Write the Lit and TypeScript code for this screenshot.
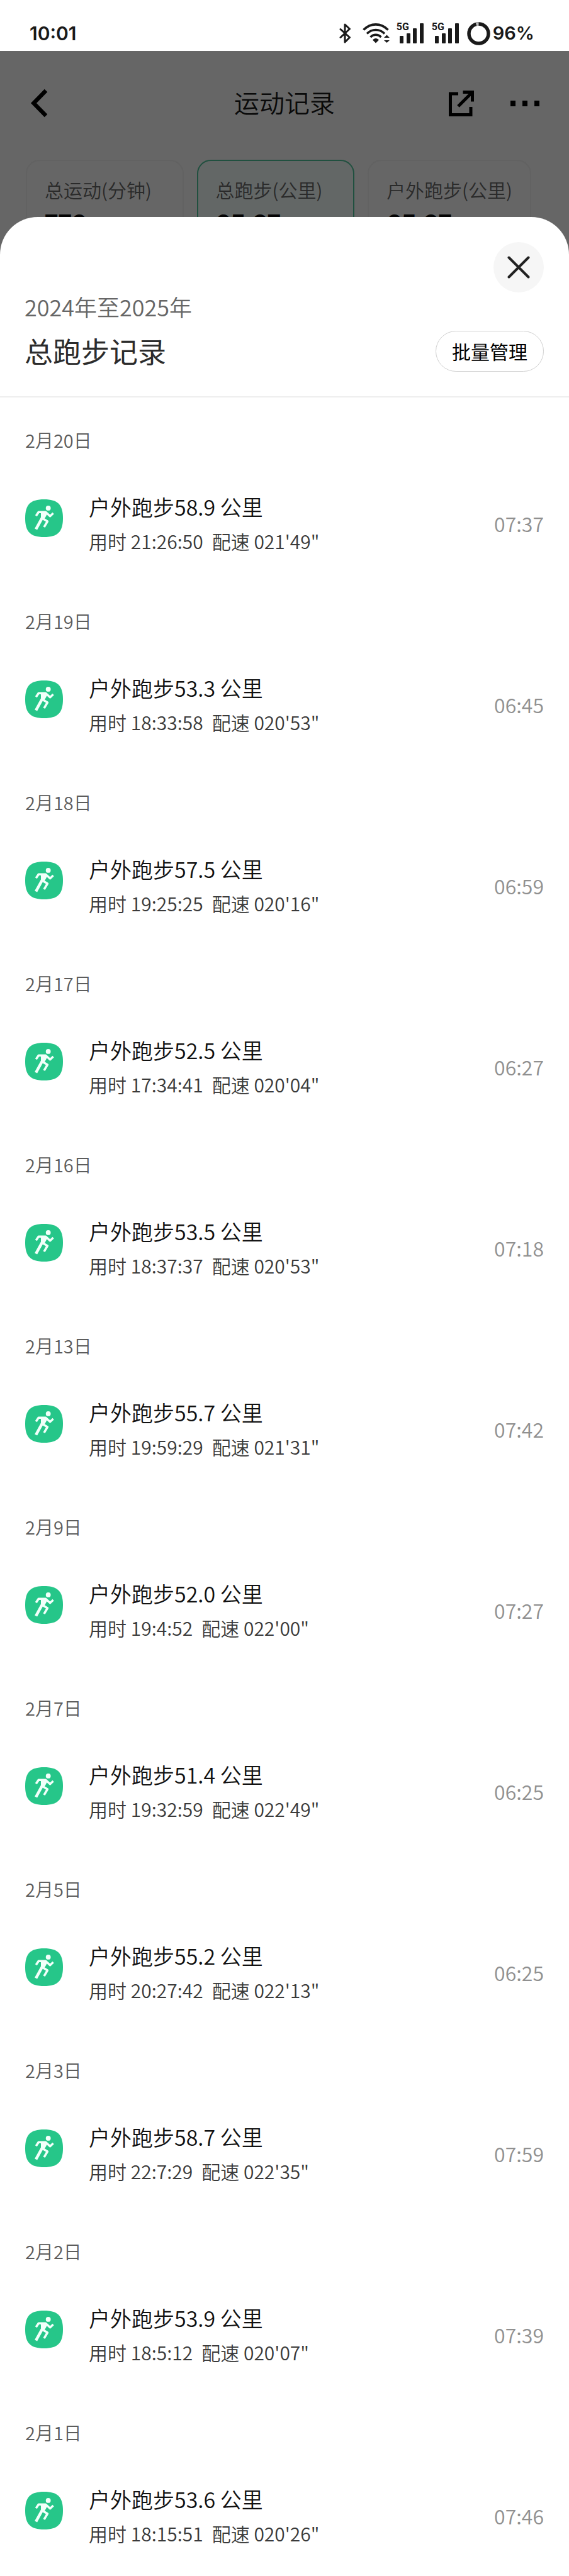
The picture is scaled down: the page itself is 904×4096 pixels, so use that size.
import { LitElement, html, css } from "lit";
import { customElement, property } from "lit/decorators.js";

interface RunRecord {
  date: string;
  km: string;
  duration: string;
  pace: string;
  time: string;
}

const RECORDS: RunRecord[] = [
  { date: "2月20日", km: "58.9", duration: "21:26:50", pace: "021'49\"", time: "07:37" },
  { date: "2月19日", km: "53.3", duration: "18:33:58", pace: "020'53\"", time: "06:45" },
  { date: "2月18日", km: "57.5", duration: "19:25:25", pace: "020'16\"", time: "06:59" },
  { date: "2月17日", km: "52.5", duration: "17:34:41", pace: "020'04\"", time: "06:27" },
  { date: "2月16日", km: "53.5", duration: "18:37:37", pace: "020'53\"", time: "07:18" },
  { date: "2月13日", km: "55.7", duration: "19:59:29", pace: "021'31\"", time: "07:42" },
  { date: "2月9日", km: "52.0", duration: "19:4:52", pace: "022'00\"", time: "07:27" },
  { date: "2月7日", km: "51.4", duration: "19:32:59", pace: "022'49\"", time: "06:25" },
  { date: "2月5日", km: "55.2", duration: "20:27:42", pace: "022'13\"", time: "06:25" },
  { date: "2月3日", km: "58.7", duration: "22:7:29", pace: "022'35\"", time: "07:59" },
  { date: "2月2日", km: "53.9", duration: "18:5:12", pace: "020'07\"", time: "07:39" },
  { date: "2月1日", km: "53.6", duration: "18:15:51", pace: "020'26\"", time: "07:46" },
];

const SUMMARY = [
  { label: "总运动(分钟)", value: "776", active: false },
  { label: "总跑步(公里)", value: "65.07", active: true },
  { label: "户外跑步(公里)", value: "65.07", active: false },
];

@customElement("status-bar")
class StatusBar extends LitElement {
  static styles = css`
    :host {
      display: flex;
      align-items: flex-end;
      justify-content: space-between;
      box-sizing: border-box;
      height: 81px;
      padding: 0 55px 8px 47px;
      color: #1a1a1a;
      background: #fff;
      font: 600 30px/40px Inter, "Open Sans", sans-serif;
    }
    .icons {
      display: flex;
      align-items: center;
      height: 40px;
      font-size: 29px;
    }
    .bt { margin-right: 18px; }
    .wifi { margin-right: 11px; }
    .signal {
      position: relative;
      width: 44px;
      height: 32px;
      margin-right: 12px;
    }
    .gen {
      position: absolute;
      left: 0;
      top: -3px;
      font: 700 16px/18px Roboto, sans-serif;
    }
    .ring { margin-right: 4px; }
    svg { display: block; }
  `;

  private signal() {
    return html`<span class="signal">
      <span class="gen">5G</span>
      <svg width="44" height="32" viewBox="0 0 44 32" fill="#1a1a1a">
        <rect x="5" y="20" width="6" height="12" rx="1" />
        <rect x="16" y="16" width="6" height="16" rx="1" />
        <rect x="26" y="8" width="6" height="24" rx="1" />
        <rect x="37" y="0" width="6" height="32" rx="1" />
      </svg>
    </span>`;
  }

  render() {
    return html`
      <span>10:01</span>
      <span class="icons">
        <svg class="bt" width="19" height="32" viewBox="0 0 19 32" fill="none" stroke="#1a1a1a" stroke-width="3" stroke-linejoin="round" stroke-linecap="round">
          <path d="M2 9.500 16.500 22.500 9 30V2l7.500 7L2 22.500" />
        </svg>
        <svg class="wifi" width="43" height="32" viewBox="0 0 43 32" fill="none" stroke="#1a1a1a" stroke-width="3.600">
          <path d="M1.500 10.500C13-1 29-1 40.500 10.500" />
          <path d="M7 16.500c8-8 20-8 28 0" />
          <path d="M12.500 22c5-5 12-5 17 0" />
          <path d="M16 26.500c3-3.500 7-3.500 10 0l-5 5z" fill="#1a1a1a" stroke="none" />
          <path d="M38.500 18.500l4.500 4.500h-9zM38.500 31l-4.500-4h9z" fill="#1a1a1a" stroke="none" />
        </svg>
        ${this.signal()} ${this.signal()}
        <svg class="ring" width="37" height="37" viewBox="0 0 37 37" fill="none" stroke-width="5.500">
          <circle cx="18.500" cy="18.500" r="15.500" stroke="#1a1a1a" />
          <path d="M14.500 3.500A15.500 15.500 0 0 1 18.500 3" stroke="#bbb" />
        </svg>
        <span>96%</span>
      </span>
    `;
  }
}

@customElement("run-record")
class RunRecordItem extends LitElement {
  @property({ attribute: false }) record!: RunRecord;

  static styles = css`
    :host {
      display: block;
      box-sizing: border-box;
      height: 288px;
      padding: 45px 40px 0;
      font-weight: 350;
    }
    .date {
      color: #5c5c5c;
      font-size: 29px;
      line-height: 44px;
    }
    .row {
      display: flex;
      align-items: center;
      margin-top: 57px;
    }
    .badge {
      flex: none;
      align-self: flex-start;
      width: 60px;
      height: 60px;
      margin: 16px 41px 0 0;
    }
    .main { flex: 1; }
    .name {
      margin: 0;
      color: #111;
      font-size: 34px;
      font-weight: inherit;
      line-height: 56px;
    }
    .detail {
      display: flex;
      gap: 14px;
      color: #3a3a3a;
      font-size: 30px;
      line-height: 52px;
    }
    .time {
      color: #909090;
      font-size: 32px;
      line-height: 44px;
    }
  `;

  render() {
    const r = this.record;
    return html`
      <div class="date">${r.date}</div>
      <div class="row">
        <svg class="badge" viewBox="0 0 72 72">
          <path fill="#26c689" d="M36 0C62 0 72 10 72 36S62 72 36 72 0 62 0 36 10 0 36 0z" />
          <circle cx="44" cy="16.700" r="4.700" fill="#f2fffa" />
          <g fill="none" stroke="#f2fffa" stroke-width="4.200" stroke-linejoin="round">
            <path d="M20.700 31.500l4.800-7.300h13.500l8.500 7.800 6-5.500" />
            <path d="M34 37l8.500 5-6.500 11" />
            <path d="M37 27L20.500 57" stroke-width="5.500" />
          </g>
          <path d="M30 23h10l2 5-5 9-7 1z" fill="#f2fffa" />
        </svg>
        <div class="main">
          <h3 class="name">户外跑步${r.km} 公里</h3>
          <div class="detail"><span>用时 ${r.duration}</span><span>配速 ${r.pace}</span></div>
        </div>
        <time class="time">${r.time}</time>
      </div>
    `;
  }
}

@customElement("app-root")
class AppRoot extends LitElement {
  static styles = css`
    :host {
      display: block;
      background: #666;
      font-family: "Noto Sans CJK SC", sans-serif;
    }
    button {
      margin: 0;
      padding: 0;
      border: 0;
      background: none;
      font-family: inherit;
      cursor: pointer;
    }
    svg { display: block; }
    .nav {
      display: grid;
      grid-template-columns: 1fr auto 1fr;
      align-items: center;
      height: 166px;
      padding: 0 47px;
    }
    .title {
      margin: 0;
      padding-bottom: 4px;
      color: #0a0a0a;
      font-size: 40px;
      font-weight: 350;
      line-height: 60px;
    }
    .actions {
      display: flex;
      align-items: center;
      justify-content: flex-end;
      gap: 58px;
    }
    .cards {
      display: flex;
      gap: 21px;
      height: 98px;
      margin-top: 7px;
      padding: 0 60px 0 41px;
      overflow: hidden;
    }
    .card {
      box-sizing: border-box;
      flex: 250 1 0;
      height: 150px;
      padding: 24px 28px;
      border: 2px solid #626262;
      border-radius: 22px;
      color: #2a2a2a;
      font-size: 30px;
      font-weight: 350;
      line-height: 42px;
      white-space: nowrap;
    }
    .card:last-child { flex-grow: 262; }
    .card.active {
      border-color: #20503f;
      background: #636766;
    }
    .value {
      display: block;
      margin-top: 10px;
      color: #050505;
      font: 800 36px/44px Inter, sans-serif;
    }
    .sheet {
      position: relative;
      margin-top: -7px;
      padding-top: 40px;
      border-radius: 60px 60px 0 0;
      background: #fff;
    }
    .close {
      display: grid;
      place-items: center;
      width: 80px;
      height: 80px;
      margin: 0 40px 0 auto;
      border-radius: 50%;
      background: #f6f6f6;
    }
    .head {
      display: flex;
      align-items: flex-end;
      justify-content: space-between;
      padding: 0 40px 39px 39px;
      border-bottom: 2px solid #eee;
    }
    .range {
      margin: 0;
      color: #666;
      font-size: 36px;
      font-weight: 350;
      line-height: 44px;
    }
    .heading {
      margin: 16px 0 0;
      color: #2c2c2c;
      font-size: 45px;
      font-weight: 400;
      line-height: 66px;
    }
    .manage {
      padding: 0 25px;
      border: 1px solid #d0d0d0;
      border-radius: 33px;
      color: #000;
      font-size: 30px;
      font-weight: 400;
      line-height: 63px;
    }
  `;

  render() {
    return html`
      <status-bar></status-bar>
      <header class="nav">
        <button aria-label="返回">
          <svg width="30" height="46" viewBox="0 0 30 46" fill="none" stroke="#000" stroke-width="6.500">
            <path d="M26 3 6.500 23 26 43" />
          </svg>
        </button>
        <h1 class="title">运动记录</h1>
        <div class="actions">
          <button aria-label="分享">
            <svg width="40" height="41" viewBox="0 0 48 49" fill="none" stroke="#000" stroke-width="6">
              <path d="M18 6H3v40h39V31" />
              <path d="M27 3h18v18M45 3 18 30" />
            </svg>
          </button>
          <button aria-label="更多">
            <svg width="46" height="9" viewBox="0 0 46 9" fill="#000">
              <path d="M0 0h8v9H0zM19 0h8v9h-8zM38 0h8v9h-8z" />
            </svg>
          </button>
        </div>
      </header>
      <section class="cards">
        ${SUMMARY.map(
          (s) => html`<div class="card ${s.active ? "active" : ""}">
            ${s.label}<strong class="value">${s.value}</strong>
          </div>`
        )}
      </section>
      <main class="sheet">
        <button class="close" aria-label="关闭">
          <svg width="36" height="36" viewBox="0 0 36 36" stroke="#222" stroke-width="4" stroke-linecap="round">
            <path d="M2.500 2.500l31 31M33.500 2.500l-31 31" />
          </svg>
        </button>
        <div class="head">
          <div>
            <p class="range">2024年至2025年</p>
            <h2 class="heading">总跑步记录</h2>
          </div>
          <button class="manage">批量管理</button>
        </div>
        ${RECORDS.map((r) => html`<run-record .record=${r}></run-record>`)}
      </main>
    `;
  }
}
